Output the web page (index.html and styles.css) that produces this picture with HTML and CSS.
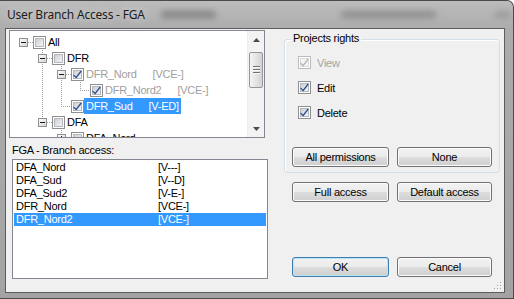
FILE: index.html
```html
<!DOCTYPE html>
<html lang="en">
<head>
    <meta charset="UTF-8">
    <title>User Branch Access - FGA</title>
    <link rel="stylesheet" href="styles.css">
</head>
<body>
    <svg class="defs" width="0" height="0">
        <defs>
            <linearGradient id="cbfill" x1="0" y1="0" x2="1" y2="1">
                <stop offset="0" stop-color="#c9cdd3"/>
                <stop offset="1" stop-color="#f6f6f6"/>
            </linearGradient>
            <linearGradient id="expfill" x1="0" y1="0" x2="1" y2="1">
                <stop offset="0" stop-color="#ffffff"/>
                <stop offset="1" stop-color="#d3d3d3"/>
            </linearGradient>
            <symbol id="cb" viewBox="0 0 13 13">
                <rect x=".5" y=".5" width="12" height="12" fill="#fff" stroke="#8e8f8f"/>
                <rect x="2.5" y="2.5" width="8" height="8" fill="url(#cbfill)" stroke="#b4b9bf"/>
            </symbol>
            <symbol id="cb-on" viewBox="0 0 13 13">
                <use href="#cb"/>
                <path d="M2.6 6.4 L5.1 8.6 L9.7 2.6 L10.7 3.6 L5.2 10.5 L2.2 7.5 Z" fill="#2d4c8e"/>
            </symbol>
            <symbol id="cb-dis" viewBox="0 0 13 13">
                <rect x=".5" y=".5" width="12" height="12" fill="#fff" stroke="#bcbcbc"/>
                <rect x="2.5" y="2.5" width="8" height="8" fill="#f4f4f4" stroke="#dcdcdc"/>
                <path d="M2.6 6.4 L5.1 8.6 L9.7 2.6 L10.7 3.6 L5.2 10.5 L2.2 7.5 Z" fill="#b4b4b4"/>
            </symbol>
            <symbol id="exp-minus" viewBox="0 0 9 9">
                <rect x=".5" y=".5" width="8" height="8" fill="url(#expfill)" stroke="#919191"/>
                <path d="M2 4.5 H7" stroke="#1a1a1a"/>
            </symbol>
            <symbol id="exp-plus" viewBox="0 0 9 9">
                <rect x=".5" y=".5" width="8" height="8" fill="url(#expfill)" stroke="#919191"/>
                <path d="M2 4.5 H7 M4.5 2 V7" stroke="#1a1a1a"/>
            </symbol>
        </defs>
    </svg>

    <div class="window">
        <div class="titlebar">
            <span class="title">User Branch Access - FGA</span>
            <span class="haze haze-1"></span>
            <span class="haze haze-2"></span>
            <span class="haze haze-3"></span>
        </div>

        <div class="client">
            <div class="left">
                <div class="tree">
                    <div class="tree-view">
                        <svg class="tree-lines" width="237" height="106">
                            <g stroke="#a0a0a0" stroke-dasharray="1 1" fill="none">
                                <path d="M18 11.5 H23"/>
                                <path d="M32.5 17 V91"/>
                                <path d="M37 27.5 H42 M37 91.5 H42"/>
                                <path d="M51.5 33 V75.5"/>
                                <path d="M56 43.5 H61"/>
                                <path d="M51 75.5 H61"/>
                                <path d="M70.5 49 V59.5"/>
                                <path d="M70 59.5 H80"/>
                                <path d="M51.5 97 V112"/>
                                <path d="M56 107.5 H61"/>
                            </g>
                        </svg>
                        <div class="node lv0">
                            <svg class="exp"><use href="#exp-minus"/></svg>
                            <svg class="cb"><use href="#cb"/></svg>
                            <span class="label">All</span>
                        </div>
                        <div class="node lv1">
                            <svg class="exp"><use href="#exp-minus"/></svg>
                            <svg class="cb"><use href="#cb"/></svg>
                            <span class="label">DFR</span>
                        </div>
                        <div class="node lv2 muted">
                            <svg class="exp"><use href="#exp-minus"/></svg>
                            <svg class="cb"><use href="#cb-on"/></svg>
                            <span class="label">DFR_Nord<span class="tag">[VCE-]</span></span>
                        </div>
                        <div class="node lv3 muted">
                            <span class="exp"></span>
                            <svg class="cb"><use href="#cb-on"/></svg>
                            <span class="label">DFR_Nord2<span class="tag">[VCE-]</span></span>
                        </div>
                        <div class="node lv2">
                            <span class="exp"></span>
                            <svg class="cb"><use href="#cb-on"/></svg>
                            <span class="label selected">DFR_Sud<span class="tag">[V-ED]</span></span>
                        </div>
                        <div class="node lv1">
                            <svg class="exp"><use href="#exp-minus"/></svg>
                            <svg class="cb"><use href="#cb"/></svg>
                            <span class="label">DFA</span>
                        </div>
                        <div class="node lv2">
                            <svg class="exp"><use href="#exp-plus"/></svg>
                            <svg class="cb"><use href="#cb"/></svg>
                            <span class="label">DFA_Nord</span>
                        </div>
                    </div>
                    <div class="vscroll">
                        <div class="arrow">
                            <svg width="7" height="4"><path d="M0 4 L3.5 0 L7 4 Z" fill="#4d4d4d"/></svg>
                        </div>
                        <div class="track">
                            <div class="thumb">
                                <span></span><span></span><span></span>
                            </div>
                        </div>
                        <div class="arrow">
                            <svg width="7" height="4"><path d="M0 0 L3.5 4 L7 0 Z" fill="#4d4d4d"/></svg>
                        </div>
                    </div>
                </div>

                <div class="list-label">FGA - Branch access:</div>
                <div class="listbox">
                    <div class="item"><span class="name">DFA_Nord</span><span>[V---]</span></div>
                    <div class="item"><span class="name">DFA_Sud</span><span>[V--D]</span></div>
                    <div class="item"><span class="name">DFA_Sud2</span><span>[V-E-]</span></div>
                    <div class="item"><span class="name">DFR_Nord</span><span>[VCE-]</span></div>
                    <div class="item selected"><span class="name">DFR_Nord2</span><span>[VCE-]</span></div>
                </div>
            </div>

            <div class="right">
                <div class="group">
                    <span class="group-title">Projects rights</span>
                    <div class="check disabled">
                        <svg class="cb"><use href="#cb-dis"/></svg>
                        <span>View</span>
                    </div>
                    <div class="check">
                        <svg class="cb"><use href="#cb-on"/></svg>
                        <span>Edit</span>
                    </div>
                    <div class="check">
                        <svg class="cb"><use href="#cb-on"/></svg>
                        <span>Delete</span>
                    </div>
                    <div class="btn-row in-group">
                        <button class="btn wide">All permissions</button>
                        <button class="btn">None</button>
                    </div>
                </div>
                <div class="btn-row access">
                    <button class="btn wide">Full access</button>
                    <button class="btn">Default access</button>
                </div>
                <div class="btn-row actions">
                    <button class="btn wide default">OK</button>
                    <button class="btn">Cancel</button>
                </div>
            </div>

            <svg class="grip" width="10" height="10">
                <g fill="#fff">
                    <rect x="8" y="2" width="1" height="1"/>
                    <rect x="5" y="5" width="1" height="1"/><rect x="8" y="5" width="1" height="1"/>
                    <rect x="2" y="8" width="1" height="1"/><rect x="5" y="8" width="1" height="1"/><rect x="8" y="8" width="1" height="1"/>
                </g>
                <g fill="#a2a2a2">
                    <rect x="7" y="1" width="1" height="1"/>
                    <rect x="4" y="4" width="1" height="1"/><rect x="7" y="4" width="1" height="1"/>
                    <rect x="1" y="7" width="1" height="1"/><rect x="4" y="7" width="1" height="1"/><rect x="7" y="7" width="1" height="1"/>
                </g>
            </svg>
        </div>
    </div>
</body>
</html>
```

FILE: styles.css
```css
html, body {
    margin: 0;
}
body {
    width: 514px;
    height: 299px;
    overflow: hidden;
    background: #ffffff;
    font-family: "Liberation Sans", Arial, sans-serif;
    font-size: 11px;
    letter-spacing: -0.25px;
    color: #000;
}
.defs {
    position: absolute;
}
.window {
    height: 299px;
    box-sizing: border-box;
    display: flex;
    flex-direction: column;
    padding: 0 8px 5px 5px;
    border: 1px solid #4a4a4a;
    border-left: none;
    border-top-right-radius: 7px;
    background: linear-gradient(#bcbcbc, #acacac 28px, #a3a3a3);
}
.titlebar {
    height: 27px;
    display: flex;
    align-items: center;
    padding-left: 2px;
    white-space: nowrap;
}
.title {
    flex: none;
    font-family: "Noto Sans", "Open Sans", sans-serif;
    font-size: 12px;
    letter-spacing: -0.2px;
    color: #1c1c1c;
    text-shadow: 0 0 8px #e6e6e6;
}
.haze {
    flex: none;
    height: 7px;
    border-radius: 4px;
    background: #6e6e6e;
    filter: blur(3px);
    opacity: 0.7;
}
.haze-1 {
    width: 55px;
    margin-left: 16px;
}
.haze-2 {
    width: 95px;
    margin-left: 125px;
    opacity: 0.55;
}
.haze-3 {
    width: 17px;
    margin-left: 58px;
    opacity: 0.35;
}

.client {
    flex: 1;
    position: relative;
    display: flex;
    background: #f0f0f0;
    border: 1px solid #5c5c5c;
}
.left {
    width: 262px;
}
.right {
    width: 216px;
    margin-left: 16px;
}

/* tree */
.tree {
    width: 256px;
    height: 108px;
    box-sizing: border-box;
    margin: 1px 0 0 3px;
    display: flex;
    background: #fff;
    border: 1px solid #828790;
}
.tree-view {
    flex: 1;
    position: relative;
    overflow: hidden;
    padding-top: 3px;
}
.tree-lines {
    position: absolute;
    top: 0;
    left: 0;
}
.node {
    position: relative;
    height: 16px;
    display: flex;
    align-items: center;
    white-space: nowrap;
}
.lv0 { padding-left: 9px; }
.lv1 { padding-left: 28px; }
.lv2 { padding-left: 47px; }
.lv3 { padding-left: 66px; }
.node .exp {
    width: 9px;
    height: 9px;
    margin-right: 5px;
    flex: none;
}
.cb {
    width: 13px;
    height: 13px;
    flex: none;
}
.node .label {
    padding: 0 2px;
    line-height: 16px;
}
.node .tag {
    margin-left: 16px;
}
.node.muted .label {
    color: #a0a0a0;
}
.node .label.selected {
    background: #3399ff;
    color: #fff;
}

/* scrollbar */
.vscroll {
    width: 17px;
    display: flex;
    flex-direction: column;
    background: #f3f3f3;
    border-left: 1px solid #ececec;
    box-sizing: border-box;
}
.vscroll .arrow {
    height: 17px;
    display: flex;
    align-items: center;
    justify-content: center;
}
.vscroll .track {
    flex: 1;
    padding-top: 4px;
}
.thumb {
    height: 36px;
    margin: 0 1px;
    box-sizing: border-box;
    border: 1px solid #979797;
    border-radius: 2px;
    background: linear-gradient(90deg, #f4f4f4, #e4e4e4 50%, #d3d3d3);
    display: flex;
    flex-direction: column;
    align-items: center;
    justify-content: center;
    gap: 1px;
}
.thumb span {
    width: 7px;
    height: 1px;
    background: #6f6f6f;
    border-bottom: 1px solid #fafafa;
}

/* list */
.list-label {
    margin: 6px 0 2px 6px;
    line-height: 13px;
    height: 13px;
}
.listbox {
    margin-left: 6px;
    width: 256px;
    height: 120px;
    box-sizing: border-box;
    padding-top: 1px;
    background: #fff;
    border: 1px solid #828790;
}
.item {
    display: flex;
    margin: 0 1px;
    padding-left: 2px;
    line-height: 13px;
    height: 13px;
}
.item .name {
    width: 142px;
}
.item.selected {
    background: #3399ff;
    color: #fff;
}

/* right side */
.group {
    position: relative;
    margin-top: 10px;
    padding: 16px 0 5px 7px;
    border: 1px solid #d5dfe5;
    border-radius: 3px;
    box-shadow: inset 1px 1px 0 #fff;
}
.group-title {
    position: absolute;
    top: -8px;
    left: 6px;
    padding: 0 2px;
    line-height: 13px;
    background: #f0f0f0;
}
.check {
    display: flex;
    align-items: center;
    height: 13px;
    margin: 0 0 12px 6px;
}
.check span {
    margin-left: 6px;
}
.check.disabled span {
    color: #a3a3a3;
}
.btn-row {
    display: flex;
    gap: 8px;
}
.btn-row.in-group {
    margin-top: 28px;
}
.btn-row.access {
    margin: 9px 0 0 8px;
}
.btn-row.actions {
    margin: 55px 0 0 8px;
}
.btn {
    width: 95px;
    height: 20px;
    padding: 0;
    font: inherit;
    letter-spacing: inherit;
    color: #000;
    border: 1px solid #707070;
    border-radius: 3px;
    background: linear-gradient(#f2f2f2, #ebebeb 50%, #dddddd 51%, #cfcfcf);
    box-shadow: inset 0 0 0 1px #fcfcfc;
}
.btn.wide {
    width: 97px;
}
.btn.default {
    border-color: #3c7fb1;
    box-shadow: inset 0 0 0 1px #b9e3f8;
}
.grip {
    position: absolute;
    right: 1px;
    bottom: 1px;
}
```
